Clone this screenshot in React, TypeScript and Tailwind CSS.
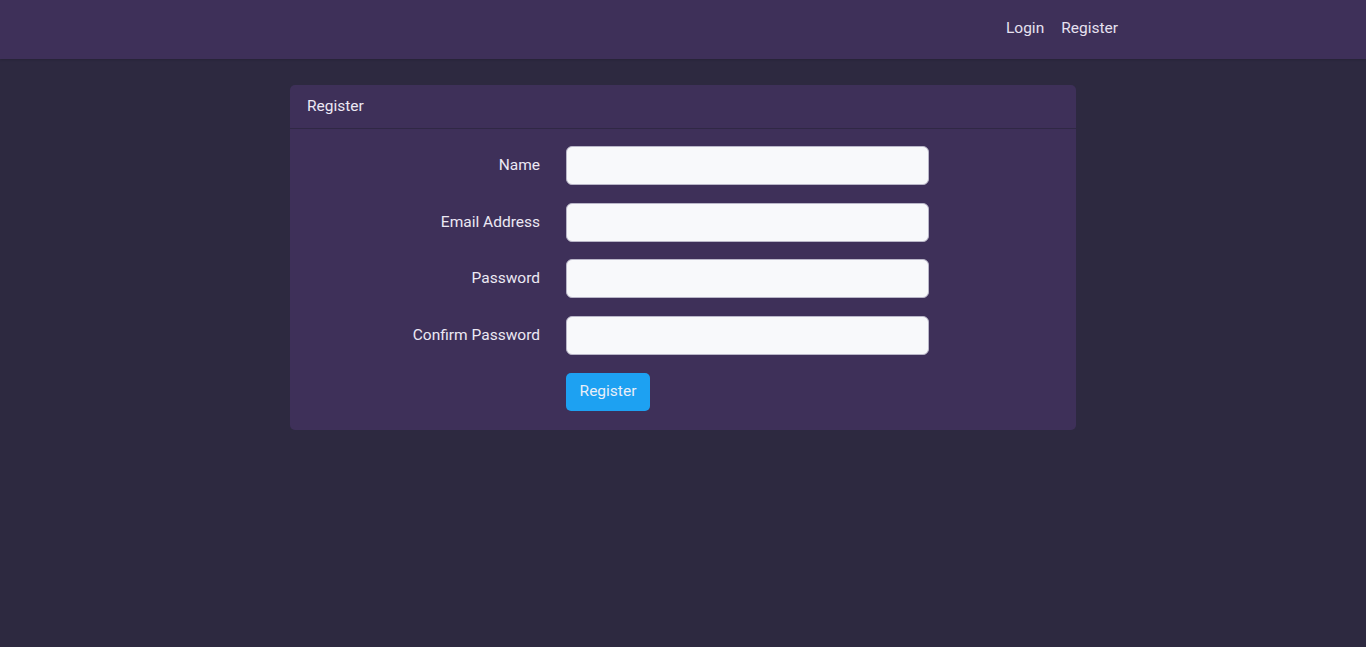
export default function App() {
  const fields = ['Name', 'Email Address', 'Password', 'Confirm Password'];

  return (
    <div
      className="min-h-screen bg-[#2d2940] text-[15.5px] text-[#ece8f4]"
      style={{ fontFamily: 'Roboto, "Liberation Sans", sans-serif' }}
    >
      {/* Navbar */}
      <nav className="h-[59px] bg-[#3e3059] shadow-[0_1px_2px_rgba(0,0,0,0.15)]">
        <div className="w-[1140px] mx-auto h-full flex items-center justify-end pr-[135px] gap-[17px] pb-[2px]">
          <a href="#" className="text-[#e6e1f0]">Login</a>
          <a href="#" className="text-[#e6e1f0]">Register</a>
        </div>
      </nav>

      {/* Card */}
      <div className="w-[786px] mx-auto mt-[26px] bg-[#3e3059] rounded-[5px]">
        <div className="h-[44px] px-[17px] flex items-center border-b border-[#302845]">
          Register
        </div>
        <div className="pt-[17px] pb-[19px] flex flex-col gap-[17.67px]">
          {fields.map((f) => (
            <div key={f} className="flex items-center">
              <label className="w-[250px] text-right">{f}</label>
              <input
                type={f.includes('Password') ? 'password' : 'text'}
                className="ml-[26px] w-[363px] h-[39px] rounded-[6px] bg-[#f8f9fb] border border-[#b9b6c8] outline-none px-3 text-gray-800"
              />
            </div>
          ))}
          <div className="flex">
            <button className="ml-[276px] w-[84px] h-[38px] rounded-[5px] bg-[#1da1f2] text-[#e8eef8]">
              Register
            </button>
          </div>
        </div>
      </div>
    </div>
  );
}
